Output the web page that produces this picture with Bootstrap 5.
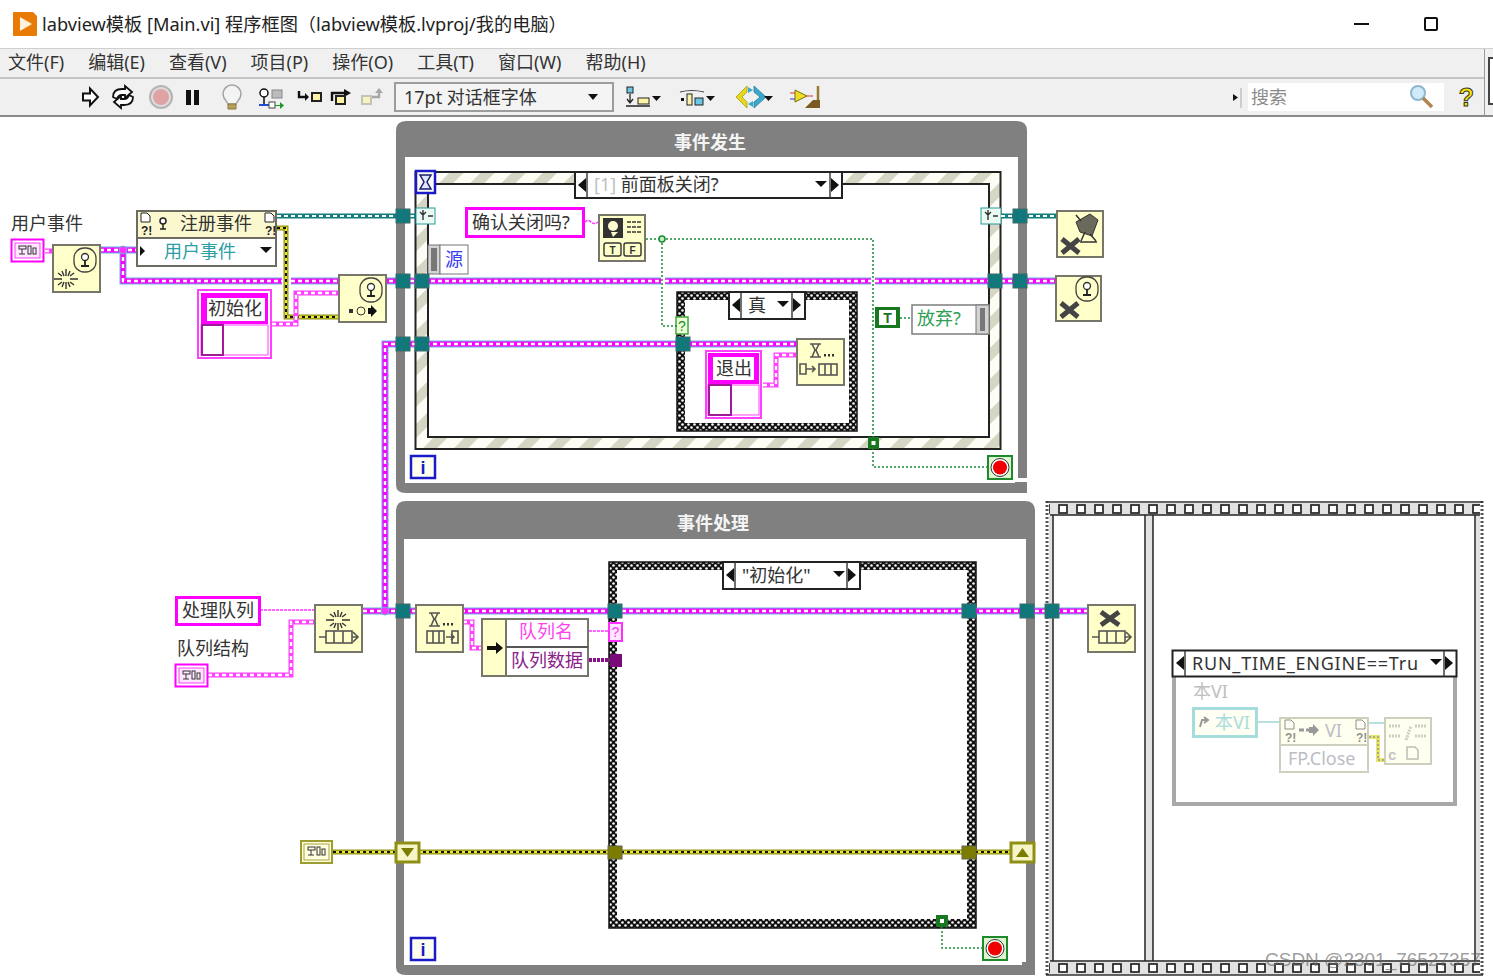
<!DOCTYPE html>
<html lang="zh">
<head>
<meta charset="utf-8">
<title>labview模板 [Main.vi] 程序框图</title>
<link href="https://cdn.jsdelivr.net/npm/bootstrap@5.3.0/dist/css/bootstrap.min.css" rel="stylesheet">
<style>
html,body{margin:0;height:978px;overflow:hidden;background:#fff}
body,.ui{font-family:"Noto Sans","Noto Sans CJK SC",sans-serif;color:#222}
svg{display:block;flex:none}
.lv-title{height:48px;background:#fff;padding-left:13px}
.lv-title-text{font-size:18.2px;margin-left:5px;line-height:1;white-space:nowrap}
.lv-min{width:15px;height:2px;background:#111;margin-right:55px}
.lv-max{width:14px;height:14px;border:2px solid #111;border-radius:2px;margin-right:55px}
.lv-chrome{background:#f0f0f0;border-top:1px solid #cfcfcf;border-bottom:2px solid #8a8a8a;height:69px}
.lv-side{width:9px;border-left:1px solid #9a9a9a;padding:8px 0 0 3px}
.lv-sidebox{height:48px;border:2px solid #444;border-right:0;background:#fff}
.lv-menu{height:30px;border-bottom:2px solid #c4c4c4;padding:0 0 3px 8px;gap:24px;font-size:18px;line-height:1;color:#333}
.lv-tools{height:36px;padding-left:80px}
.lv-combo{width:220px;height:30px;margin-left:9px;margin-right:6px;border:2px solid #9d9d9d;background:#f4f4f4;padding:0 14px 0 8px;font-size:18px;line-height:1;color:#333}
.lv-caret{width:0;height:0;border:5px solid transparent;border-top:6px solid #111;border-bottom:0}
.lv-searchbox{width:196px;height:28px;background:#fff;padding:0 10px 0 3px;font-size:18px;color:#8b8b8b;margin-left:6px;margin-right:12px}
.lv-help{margin-right:7px}
.c{font-family:"Noto Sans","Noto Sans CJK SC",sans-serif;font-size:18px;fill:#333}
.bold{font-weight:700;fill:#f4f4f4}
.teal{fill:#2b9ea6}.blue{fill:#3a3af0}.pink{fill:#ff44ee}.purp{fill:#8a208a}.grn{fill:#2f9f55}.dim{fill:#c0c0c0}.dimt{fill:#a9dcdc}.dimg{fill:#bcbcc4}
.loop{fill:#808080}
.nd{fill:#ffffc9;stroke:#76766a;stroke-width:2}
.nd2{fill:#fffff0;stroke:#cfcfbd;stroke-width:2}
.sel{fill:#fff;stroke:#222;stroke-width:2}
.ln{fill:none;stroke:#333;stroke-width:1.4}
.ln2{fill:none;stroke:#555;stroke-width:1.6}
.bk{fill:#111}
.x{fill:none;stroke:#444;stroke-width:5}
.wb,.wm,.wd,.wt,.wt2,.wy,.wy2,.wg,.wpk,.wpd{fill:none}
.wb{stroke:#63b3e0;stroke-width:7}
.wm{stroke:#ff00ff;stroke-width:5}
.wd{stroke:#fff;stroke-width:2.4;stroke-dasharray:4 3}
.wpk{stroke:#ff40ff;stroke-width:5}
.wt{stroke:#137e80;stroke-width:5}
.wt2{stroke:#fff;stroke-width:2;stroke-dasharray:4 3}
.wy{stroke:#8f8f10;stroke-width:5}
.wy2{stroke:#111;stroke-width:2;stroke-dasharray:3 3}
.wyb{fill:none;stroke:#e8e840;stroke-width:2.500}
.wg{stroke:#1d8a3a;stroke-width:1.5;stroke-dasharray:2 2}
.th{fill:none;stroke:#ff30ff;stroke-width:1.5;stroke-dasharray:3 1}
.tun{fill:#10787a;stroke:#3c6a6a;stroke-width:1}
.olv{fill:#7c7c00;stroke:#66664a;stroke-width:1}
.con{fill:#fff;stroke:#ff00ff}
.wm-txt{font-family:"Liberation Sans",sans-serif;font-size:19px;fill:#666;fill-opacity:.65}
</style>
</head>
<body class="d-flex flex-column ui">

<header class="lv-title d-flex align-items-center">
<svg width="24" height="24" viewBox="0 0 24 24"><path d="M0 1a1 1 0 0 1 1-1h19l4 4v19a1 1 0 0 1-1 1H1a1 1 0 0 1-1-1z" fill="#e87b06"/><path d="M7 5l12 7-12 7z" fill="#fff2dd"/></svg>
<span class="lv-title-text">labview模板 [Main.vi] 程序框图（labview模板.lvproj/我的电脑）</span>
<div class="ms-auto d-flex align-items-center"><i class="lv-min d-block"></i><i class="lv-max d-block"></i></div>
</header>

<div class="lv-chrome d-flex">
<div class="flex-grow-1 d-flex flex-column">
<nav class="lv-menu d-flex align-items-center">
<span>文件(F)</span><span>编辑(E)</span><span>查看(V)</span><span>项目(P)</span><span>操作(O)</span><span>工具(T)</span><span>窗口(W)</span><span>帮助(H)</span>
</nav>
<div class="lv-tools d-flex align-items-center">
<svg width="305" height="36" viewBox="80 79 305 36">
<path d="M83 93.500h7v-5l8 8.500-8 8.500v-5h-7z" fill="#fff" stroke="#111" stroke-width="2"/>
<path d="M113 97q0-8 9-8h3v-3l7 6-7 6v-3h-3q-4 0-5 4z" fill="#fff" stroke="#111" stroke-width="1.800"/>
<path d="M133 97q0 8-9 8h-3v3l-7-6 7-6v3h3q4 0 5-4z" fill="#fff" stroke="#111" stroke-width="1.800"/>
<circle cx="161" cy="97" r="11" fill="#ddd" stroke="#b4b4b4" stroke-width="2"/><circle cx="161" cy="97" r="8" fill="#dfa3a3"/>
<path d="M186 90h5v15h-5zM194 90h5v15h-5z" fill="#111"/>
<path d="M228 104c-1-3-5-5-5-10a9 9 0 0 1 18 0c0 5-4 7-5 10z" fill="#f4f4f4" stroke="#a3a3a3" stroke-width="1.500"/><path d="M228 104h8v5h-8z" fill="#b8a05c" stroke="#8e7a3c"/>
<circle cx="264" cy="93" r="4" fill="#fff" stroke="#111" stroke-width="1.500"/><path d="M264 97v9" stroke="#111" stroke-width="1.500"/><path d="M259 105h11" stroke="#1e4fd0" stroke-width="2"/><rect x="272" y="90" width="10" height="8" fill="#bbb" stroke="#888"/><rect x="269" y="102" width="6" height="6" fill="#fff" stroke="#444"/><path d="M275 105h5v-3l4 3.500-4 3.500v-3h-5" fill="#1c9a2c"/>
<path d="M299 91v6h7" fill="none" stroke="#111" stroke-width="2.400"/><path d="M305 93l4 4-4 4z" fill="#111"/><rect x="312" y="93" width="9" height="8" fill="#fbf3a5" stroke="#222" stroke-width="2"/>
<path d="M332 101v-8h12" fill="none" stroke="#111" stroke-width="2.400"/><path d="M344 89l7 4-7 4z" fill="#111"/><rect x="336" y="96" width="9" height="8" fill="#fbf3a5" stroke="#222" stroke-width="2"/>
<rect x="362" y="96" width="9" height="8" fill="#f6f3c0" stroke="#c4c4b4" stroke-width="2"/><path d="M372 97h7v-5" fill="none" stroke="#a8a8a8" stroke-width="2.400"/><path d="M375 93l4-5 4 5z" fill="#a8a8a8"/>
</svg>
<div class="lv-combo d-flex align-items-center justify-content-between"><span>17pt 对话框字体</span><i class="lv-caret d-block"></i></div>
<svg width="205" height="36" viewBox="620 79 205 36">
<rect x="627" y="87" width="6" height="6" fill="#6cc6e6" stroke="#222"/><path d="M630 94v9M627 99l3 4 3-4M626 106h24" fill="none" stroke="#222" stroke-width="1.300"/><rect x="638" y="98" width="11" height="6" fill="#fbf3a5" stroke="#222"/><path d="M652 96h9l-4.500 5z" fill="#111"/>
<path d="M680 92q12-3 24 0" fill="none" stroke="#444" stroke-width="1.200"/><rect x="681" y="98" width="3" height="3" fill="#111"/><rect x="687" y="94" width="5" height="11" fill="#fbf3a5" stroke="#222"/><rect x="695" y="98" width="8" height="7" fill="#6cc6e6" stroke="#222"/><path d="M706 96h9l-4.500 5z" fill="#111"/>
<path d="M747 86l-11 11 11 11v-6l-5-5 5-5z" fill="#e6d81e" stroke="#a8a014" stroke-width=".8"/><path d="M754 86l12 11-12 11v-6l6-5-6-5z" fill="#3aa8cc" stroke="#2a7c9c" stroke-width=".8"/><path d="M748 87l5 3-5 3zM753 107l-5-3 5-3z" fill="#3aa8cc"/><path d="M772 96h9l-4.500 5z" fill="#111" transform="translate(-8 0)"/>
<path d="M795 90l12 6-12 6z" fill="#eedd22" stroke="#7a6f10"/><path d="M790 93h5" stroke="#d33"/><path d="M790 99h5" stroke="#33d"/><path d="M807 96h6" stroke="#d33"/><path d="M818 86v14" stroke="#9a7a30" stroke-width="2.500"/><path d="M813 100h7v8h-15z" fill="#7a5a20"/>
</svg>
<div class="ms-auto d-flex align-items-center">
<svg width="10" height="28" viewBox="0 0 10 28"><path d="M1 11l5 3.500-5 3.500z" fill="#111"/><path d="M9 5v20" stroke="#aaa"/></svg>
<div class="lv-searchbox d-flex align-items-center justify-content-between"><span>搜索</span>
<svg width="26" height="26" viewBox="0 0 26 26"><circle cx="10" cy="9" r="7" fill="#cfeafa" stroke="#8fb6cc" stroke-width="2"/><path d="M15 14l9 9" stroke="#b0854f" stroke-width="3.500"/></svg></div>
<svg class="lv-help" width="21" height="32" viewBox="0 0 21 32"><text x="10.500" y="25" text-anchor="middle" font-size="25" font-weight="700" font-family="Liberation Sans" fill="#f4e400" stroke="#333" stroke-width="1">?</text></svg>
</div>
</div>
</div>
<aside class="lv-side"><div class="lv-sidebox"></div></aside>
</div>

<svg width="1493" height="861" viewBox="0 117 1493 861" aria-label="程序框图">
<defs>
<pattern id="stripe" width="22" height="22" patternUnits="userSpaceOnUse" patternTransform="rotate(45)"><rect width="22" height="22" fill="#fdfdf6"/><rect width="10" height="22" fill="#d6d6c4"/></pattern>
<pattern id="chk" width="6" height="6" patternUnits="userSpaceOnUse"><rect width="6" height="6" fill="#111"/><circle cx="1.500" cy="1.500" r="1.300" fill="#fff"/><circle cx="4.500" cy="4.500" r="1.300" fill="#fff"/></pattern>
<pattern id="film" x="1058" y="503" width="18" height="14" patternUnits="userSpaceOnUse"><rect width="18" height="14" fill="#e2e2e2"/><rect x="1" y="2" width="8" height="8" fill="#fff" stroke="#222" stroke-width="1.700"/></pattern>
<pattern id="film2" x="1058" y="962" width="18" height="14" patternUnits="userSpaceOnUse"><rect width="18" height="14" fill="#e2e2e2"/><rect x="1" y="2" width="8" height="8" fill="#fff" stroke="#222" stroke-width="1.700"/></pattern>

<path id="refw" d="M100 250H137M123 250V281H282M291 281H661M665 281H871M875 281H1056M385 611V344H797M363 611H1088"/>
<path id="pkw" d="M45 251H53M272 324H296V293H339M763 385H776V355H797M208 675H291V622H315M463 622H472V648H482"/>
<path id="tew" d="M277 216H416M1001 216H1057"/>
<path id="grn" d="M646 239H873V467H989M662 239V326H677M900 318H912M942 927V948H984"/>
<path id="yelw" d="M277 228H286V317H338M333 852H1011"/>

<g id="cfg"><rect x="-8" y="-5" width="7" height="3" fill="none" stroke="#333"/><path d="M-5-2v5M-8 3h6" stroke="#333"/><rect x="1" y="-5" width="3" height="8" fill="none" stroke="#333"/><rect x="6" y="-3" width="3" height="6" fill="none" stroke="#333"/></g>
<g id="ant"><rect x="-11" y="-12" width="22" height="24" rx="10" fill="none" stroke="#444" stroke-width="1.300"/><circle cy="-3" r="3.500" fill="#fff" stroke="#333" stroke-width="1.300"/><path d="M0 0v5M-4 6h8" stroke="#222" stroke-width="1.800"/></g>
<g id="burst" class="ln"><path d="M0-10v7M0 3v7M-12 0h8M4 0h8M-8-6l4 3M4 3l4 3M8-6l-4 3M-4 3l-4 3M-4-8l2 5M2 3l2 5M4-8l-2 5M-2 3l-2 5"/></g>
<g id="que" class="ln2"><path d="M-19 0h7M14 0h5M15-5l5 5-5 5"/><rect x="-12" y="-6" width="26" height="12"/><path d="M-4-6v12M5-6v12"/></g>
<g id="hg" class="ln2"><path d="M-7-7H4M-5-7L-2-1-5 6M2-7L-1-1 2 6M-7 6H4"/><rect x="7" y="3" width="2" height="2.500" fill="#333" stroke="none"/><rect x="11" y="3" width="2" height="2.500" fill="#333" stroke="none"/><rect x="15" y="3" width="2" height="2.500" fill="#333" stroke="none"/></g>
<g id="arrL"><path d="M0-7v14l-8-7z" class="bk"/></g>
<g id="arrR"><path d="M0-7v14l8-7z" class="bk"/></g>
<g id="dn"><path d="M-6-3h12l-6 6z" class="bk"/></g>
<g id="info"><rect width="24" height="22" fill="#fffff0" stroke="#1a1ac8" stroke-width="2.500"/><text x="12" y="18" text-anchor="middle" font-family="Liberation Sans" font-weight="700" font-size="18" fill="#1a1ac8">i</text></g>
<g id="stop"><rect width="24" height="23" fill="#dff5d0" stroke="#1f8a2b" stroke-width="2"/><circle cx="12" cy="11.500" r="9" fill="#fff" stroke="#333"/><circle cx="12" cy="11.500" r="7" fill="#f00000"/></g>
<g id="bang"><path d="M0 0h6l3 3v6H0z" fill="#fff" stroke="#222"/><text x="0" y="22" font-family="Liberation Sans" font-weight="700" font-size="12" fill="#222">?!</text></g>
<g id="mq"><rect width="13" height="18" fill="#ffe8ff" stroke="#ff30ff" stroke-width="2"/><text x="6.500" y="14" text-anchor="middle" font-family="Liberation Sans" font-size="14" fill="#ff30ff">?</text></g>
</defs>

<!-- 事件发生 -->
<path class="loop" fill-rule="evenodd" d="M396 131q0-10 10-10H1017q10 0 10 10V478H1018V157H405V483H1015V482H1027V493H406Q396 493 396 485z"/>
<text class="c bold" x="710" y="149" text-anchor="middle">事件发生</text>

<rect x="415.500" y="172" width="585" height="277" fill="url(#stripe)" stroke="#222" stroke-width="2"/>
<rect x="428" y="184" width="561" height="253" fill="#fff" stroke="#222" stroke-width="2"/>
<rect x="416" y="171" width="19" height="22" fill="#fffff0" stroke="#1a1ac8" stroke-width="2.500"/>
<path d="M420 175h11l-4 7 4 7h-11l4-7z" fill="#dfe6ff" stroke="#1a1a70" stroke-width="1.500"/>

<rect class="sel" x="575" y="172" width="267" height="26"/><path class="ln" stroke-width="2" d="M587 172v26M830 172v26"/>
<use href="#arrL" x="586" y="185"/><use href="#arrR" x="831" y="185"/><use href="#dn" x="821" y="184"/>
<text class="c" x="594" y="191"><tspan class="dim">[1]</tspan> 前面板关闭?</text>

<g stroke="#2a9a9a"><rect x="416" y="208" width="19" height="16" fill="#e9fbf2"/><rect x="981" y="208" width="20" height="16" fill="#e9fbf2"/></g>
<g class="ln"><path d="M423 210v10M426 212l-3 3-3-3M428 216h5M988 210v10M991 212l-3 3-3-3M993 216h5"/></g>

<rect class="con" stroke-width="3" x="466.500" y="208.500" width="117" height="28"/>
<text class="c" x="472" y="229">确认关闭吗?</text>

<path class="nd" d="M599 215h46v46h-46z"/>
<rect x="603" y="218" width="20" height="20" fill="#333"/><circle cx="613" cy="226" r="5" fill="#fffbd0"/><path d="M611 232h7l-5 5z" fill="#fffbd0"/><path class="ln" stroke-dasharray="4 1" d="M627 222h14M627 227h14M627 232h14"/>
<rect class="ln" x="604" y="243" width="17" height="13" rx="2"/><rect class="ln" x="624" y="243" width="17" height="13" rx="2"/>
<text x="612.500" y="254" text-anchor="middle" font-family="Liberation Sans" font-weight="700" font-size="10" fill="#333">T</text><text x="632.500" y="254" text-anchor="middle" font-family="Liberation Sans" font-weight="700" font-size="10" fill="#333">F</text>

<rect x="428" y="245" width="12" height="29" fill="#d3d3d3" stroke="#777"/><rect x="431" y="248" width="6" height="23" fill="#777"/>
<rect x="440" y="245" width="28" height="29" fill="#fff" stroke="#777"/>
<text class="c blue" x="445" y="266">源</text>

<!-- 内层条件 -->
<rect x="677" y="292" width="180" height="139" fill="url(#chk)" stroke="#111" stroke-width="1.500"/>
<rect x="685" y="300" width="164" height="123" fill="#fff"/>
<rect class="sel" x="729" y="292" width="76" height="27"/><path class="ln" stroke-width="2" d="M741 292v27M792 292v27"/>
<use href="#arrL" x="740" y="305"/><use href="#arrR" x="793" y="305"/><use href="#dn" x="783" y="304"/>
<text class="c" x="748" y="312">真</text>
<rect x="676" y="317" width="12" height="17" fill="#ebffd8" stroke="#44a83c" stroke-width="1.500"/><text x="682" y="331" text-anchor="middle" font-family="Liberation Sans" font-size="14" fill="#238a2b">?</text>

<rect x="875" y="307" width="25" height="21" fill="#17781f"/><rect x="879" y="310" width="17" height="15" fill="#fff"/><text x="887.500" y="323" text-anchor="middle" font-family="Liberation Sans" font-weight="700" font-size="14" fill="#17781f">T</text>
<rect x="912" y="305" width="77" height="29" fill="#fff" stroke="#7d7d7d" stroke-width="1.500"/><rect x="976" y="305" width="13" height="29" fill="#d3d3d3" stroke="#777"/><rect x="980" y="308" width="5" height="23" fill="#777"/>
<text class="c grn" x="917" y="325">放弃?</text>

<!-- 事件处理 -->
<path class="loop" fill-rule="evenodd" d="M396 511q0-10 10-10H1025q10 0 10 10V962H1026V539H404V965H1022V962H1035V975H406Q396 975 396 967z"/>
<text class="c bold" x="713" y="530" text-anchor="middle">事件处理</text>
<rect x="609" y="562" width="367" height="366" fill="url(#chk)" stroke="#111" stroke-width="1.500"/>
<rect x="617" y="570" width="350" height="349" fill="#fff"/>
<rect class="sel" x="723" y="562" width="137" height="27"/><path class="ln" stroke-width="2" d="M735 562v27M847 562v27"/>
<use href="#arrL" x="734" y="575"/><use href="#arrR" x="848" y="575"/><use href="#dn" x="839" y="574"/>
<text class="c" x="742" y="582">"初始化"</text>

<!-- 顺序结构 -->
<rect x="1049" y="503" width="431" height="12" fill="url(#film)"/>
<rect x="1049" y="962" width="431" height="13" fill="url(#film2)"/>
<path d="M1047 501V977M1482 501V977" fill="none" stroke="#555" stroke-width="3" stroke-dasharray="2 2"/>
<path d="M1046 502H1483M1046 975H1483" stroke="#333" stroke-width="1.500"/>
<path d="M1146 516h7v445h-7zM1049 516h4v445h-4zM1476 516h4v445h-4z" fill="#e2e2e2"/>
<path d="M1050 515H1480M1050 961H1480M1053 515V961M1145 515V961M1153 515V961M1475 515V961" stroke="#222" stroke-width="1.500" fill="none"/>

<!-- 线 -->
<use href="#tew" class="wt"/><use href="#tew" class="wt2"/>
<use href="#yelw" class="wy"/><use href="#yelw" class="wyb"/><use href="#yelw" class="wy2"/>
<use href="#refw" class="wb"/><use href="#refw" class="wm"/><use href="#refw" class="wd"/>
<use href="#pkw" class="wpk"/><use href="#pkw" class="wd"/>
<use href="#grn" class="wg"/>
<circle cx="662" cy="239" r="3" fill="#bff0bf" stroke="#1d8a3a" stroke-width="1.500"/>
<circle cx="123" cy="250" r="4" fill="#ff30ff" stroke="#63b3e0"/>
<circle cx="385" cy="611" r="4" fill="#ff30ff" stroke="#63b3e0"/>
<path class="th" d="M585 222q3-3 6 0t7 0M260 610H315M589 631H608"/>
<path d="M589 660H610" stroke="#8a108a" stroke-width="4" stroke-dasharray="3 1"/>

<!-- 隧道 -->
<g class="tun">
<rect x="396" y="209" width="14" height="14"/><rect x="1013" y="209" width="14" height="14"/>
<rect x="396" y="274" width="14" height="14"/><rect x="415" y="274" width="14" height="14"/><rect x="988" y="274" width="14" height="14"/><rect x="1013" y="274" width="14" height="14"/>
<rect x="396" y="337" width="14" height="14"/><rect x="415" y="337" width="14" height="14"/><rect x="676" y="337" width="14" height="14"/>
<rect x="396" y="604" width="14" height="14"/><rect x="608" y="604" width="14" height="14"/><rect x="962" y="604" width="14" height="14"/><rect x="1020" y="604" width="14" height="14"/><rect x="1045" y="604" width="14" height="14"/>
</g>
<rect class="olv" x="608" y="846" width="14" height="13"/><rect class="olv" x="962" y="846" width="14" height="13"/>

<rect x="868" y="437" width="11" height="12" fill="#17781f"/><rect x="871.500" y="441" width="4" height="4" fill="#fff"/>
<use href="#stop" x="988" y="456"/>
<use href="#info" x="411" y="456"/>

<!-- 左侧节点 -->
<text class="c" x="11" y="230">用户事件</text>
<rect x="11.500" y="239.500" width="32" height="22" fill="#fff" stroke="#ff00ff" stroke-width="2"/><rect x="15" y="243" width="25" height="15" fill="#ffe8ff" stroke="#ff40ff"/><use href="#cfg" x="27" y="251"/>
<rect class="nd" x="53" y="245" width="47" height="47"/><use href="#ant" x="85" y="260"/><use href="#burst" x="66" y="279"/>

<rect x="137" y="211" width="139" height="27" fill="#fbf8cf" stroke="#6c6c60" stroke-width="2"/>
<rect x="137" y="238" width="139" height="28" fill="#fff" stroke="#6c6c60" stroke-width="2"/>
<use href="#bang" x="141" y="213"/><use href="#bang" x="265" y="213"/>
<circle cx="163" cy="221" r="3" fill="#fff" stroke="#222" stroke-width="1.500"/><path d="M163 224v5M160 229h6" stroke="#222" stroke-width="1.500"/>
<text class="c" x="180" y="230">注册事件</text>
<path class="bk" d="M140 246l5 5-5 5z"/><use href="#dn" x="266" y="250"/>
<text class="c teal" x="164" y="258">用户事件</text>

<rect x="198" y="290" width="73" height="68" fill="#fff" stroke="#ff40ff" stroke-width="2"/>
<path d="M201 293h67v31H201z" fill="#ff00ff"/><rect x="207" y="298" width="58" height="23" fill="#fff"/>
<rect x="201" y="325" width="67" height="30" fill="#fff" stroke="#ff40ff"/>
<rect x="202" y="325" width="21" height="30" fill="#fff" stroke="#a01a9a" stroke-width="2"/>
<text class="c" x="208" y="315">初始化</text>

<rect class="nd" x="339" y="275" width="47" height="47"/><use href="#ant" x="371" y="290"/>
<rect x="349" y="309" width="4" height="4" fill="#333"/><circle cx="361" cy="311" r="4" fill="none" stroke="#333"/><path class="bk" d="M368 308h3v-3l6 6-6 6v-3h-3z"/>

<rect class="nd" x="1057" y="211" width="46" height="46"/><path class="x" d="M1062 239l17 14M1079 239l-17 14"/>
<path d="M1076 222l14-8 8 6-6 16-12-4z" fill="#6a6a5c" stroke="#333"/><path d="M1076 215l5 6M1085 232l-4 9M1090 234l6 7M1080 242h17" stroke="#333" fill="none" stroke-width="1.500"/>
<rect class="nd" x="1056" y="276" width="45" height="45"/><path class="x" d="M1061 303l17 14M1078 303l-17 14"/><use href="#ant" x="1087" y="289"/>

<rect class="nd" x="797" y="339" width="47" height="46"/><use href="#hg" x="817" y="351"/>
<path class="ln2" d="M800 364h6v10h-6zM806 369h9M812 366l3 3-3 3"/><rect class="ln2" x="819" y="364" width="18" height="11"/><path class="ln2" d="M825 364v11M831 364v11"/>

<rect x="706" y="351" width="55" height="67" fill="#fff" stroke="#ff40ff" stroke-width="2"/>
<path d="M708 353h51v31H708z" fill="#ff00ff"/><rect x="713" y="357" width="41" height="23" fill="#fff"/>
<rect x="708" y="385" width="51" height="30" fill="#fff" stroke="#ff40ff"/>
<rect x="709" y="385" width="22" height="30" fill="#fff" stroke="#a01a9a" stroke-width="2"/>
<text class="c" x="716" y="375">退出</text>

<rect class="con" stroke-width="3" x="176.500" y="597.500" width="83" height="27"/><text class="c" x="182" y="617">处理队列</text>
<text class="c" x="177" y="655">队列结构</text>
<rect x="175.500" y="664.500" width="32" height="22" fill="#fff" stroke="#ff00ff" stroke-width="2"/><rect x="179" y="668" width="25" height="15" fill="#ffe8ff" stroke="#ff40ff"/><use href="#cfg" x="191" y="676"/>
<rect class="nd" x="315" y="605" width="47" height="47"/><use href="#burst" x="338" y="620"/><use href="#que" x="338" y="637"/>
<rect class="nd" x="416" y="605" width="47" height="47"/><use href="#hg" x="436" y="620"/>
<rect class="ln2" x="427" y="631" width="17" height="12"/><path class="ln2" d="M433 631v12M439 631v12M446 637h8M451 634l3 3-3 3"/><rect class="ln2" x="452" y="631" width="6" height="12"/>

<rect x="482" y="619" width="106" height="57" fill="#fff" stroke="#76766a" stroke-width="2"/>
<rect x="482" y="619" width="24" height="57" fill="#ffffc9" stroke="#76766a" stroke-width="2"/><path d="M506 647h82" stroke="#555" stroke-width="2"/>
<path class="bk" d="M487 646h9v-4l7 6-7 6v-4h-9z"/>
<text class="c pink" x="519" y="638">队列名</text>
<text class="c purp" x="511" y="667">队列数据</text>
<use href="#mq" x="609" y="623"/>
<rect x="610" y="654" width="12" height="13" fill="#7a0a7a"/>

<rect x="301" y="841" width="31" height="22" fill="#ffffe0" stroke="#9c9c30" stroke-width="2"/><rect x="304" y="844" width="25" height="16" fill="#ffffe0" stroke="#a6a640"/><use href="#cfg" x="316" y="852"/>
<rect x="396" y="843" width="23" height="19" fill="#f5f5c8" stroke="#8f8f16" stroke-width="3"/><path d="M401 848h13l-6.500 9z" fill="#7c7c00"/>
<rect x="1011" y="843" width="23" height="19" fill="#f5f5c8" stroke="#8f8f16" stroke-width="3"/><path d="M1016 857h13l-6.500-9z" fill="#7c7c00"/>
<rect x="936" y="915" width="12" height="12" fill="#17781f"/><rect x="940" y="919" width="4" height="4" fill="#fff"/>
<use href="#stop" x="983" y="937"/>
<use href="#info" x="411" y="938"/>

<rect class="nd" x="1088" y="605" width="47" height="47"/><path class="x" d="M1101 612l18 13M1119 612l-18 13"/><use href="#que" x="1111" y="637"/>

<rect x="1174" y="652" width="281" height="152" fill="#fff" stroke="#a8a8a8" stroke-width="4"/>
<rect class="sel" x="1172.500" y="650.500" width="284" height="26"/><path class="ln" stroke-width="2" d="M1185 651v26M1444 651v26"/>
<use href="#arrL" x="1184" y="663"/><use href="#arrR" x="1445" y="663"/><use href="#dn" x="1436" y="662"/>
<text class="c" x="1192" y="670" textLength="226">RUN_TIME_ENGINE==Tru</text>
<text class="c dim" x="1193" y="698">本VI</text>
<rect x="1193.500" y="708.500" width="63" height="28" fill="#fffff4" stroke="#a5dcdc" stroke-width="3"/>
<path d="M1200 727l2-7h5M1204 717l4 3-4 3" fill="none" stroke="#999" stroke-width="2"/>
<text class="c dimt" x="1215" y="729">本VI</text>
<path d="M1257 722H1280M1369 723H1385" stroke="#b8e0e0" stroke-width="2"/>
<path d="M1369 737H1378V760H1385" fill="none" stroke="#e6e66a" stroke-width="4"/><path d="M1369 737H1378V760H1385" fill="none" stroke="#999" stroke-width="1.500" stroke-dasharray="2 2"/>
<rect class="nd2" x="1280" y="718" width="88" height="27"/><rect x="1280" y="745" width="88" height="27" fill="#fff" stroke="#cfcfc0" stroke-width="2"/>
<g opacity=".5"><use href="#bang" x="1285" y="720"/><use href="#bang" x="1356" y="720"/></g>
<path d="M1299 730h5M1306 730h4" stroke="#999" stroke-width="3"/><path d="M1309 727h4v-3l6 6-6 6v-3h-4z" fill="#999"/>
<text class="c dimg" x="1325" y="737">VI</text>
<text class="c dimg" x="1288" y="765">FP.Close</text>
<rect class="nd2" x="1385" y="718" width="46" height="46"/>
<path d="M1389 726h12M1389 736h12M1406 740l5-14M1415 726h12M1415 736h12" stroke="#cfcfc0" stroke-width="3" stroke-dasharray="2 1"/>
<text x="1388" y="760" font-family="Liberation Sans" font-weight="700" font-size="15" fill="#c4c4c4">c</text>
<path d="M1407 747h8l3 3v9h-11z" fill="none" stroke="#bfbfb0" stroke-width="1.500"/>

<text class="wm-txt" x="1265" y="966">CSDN @2301_76527357</text>
</svg>

<script src="https://cdn.jsdelivr.net/npm/bootstrap@5.3.0/dist/js/bootstrap.bundle.min.js"></script>
</body>
</html>
